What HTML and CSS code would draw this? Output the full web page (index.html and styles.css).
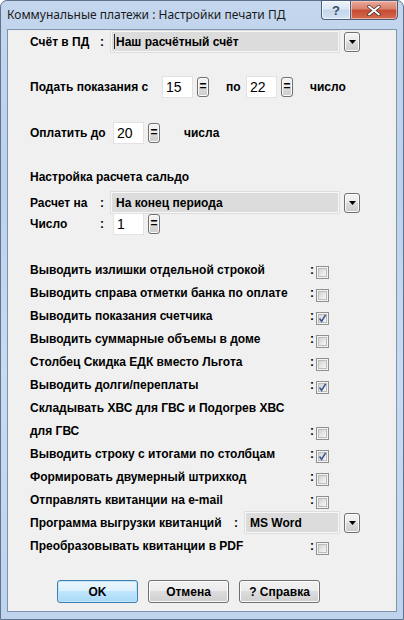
FILE: index.html
```html
<!DOCTYPE html>
<html>
<head>
<meta charset="utf-8">
<link rel="stylesheet" href="styles.css">
</head>
<body>
<div class="window">
  <div class="titlebar">
    <span class="title">Коммунальные платежи : Настройки печати ПД</span>
    <div class="caption-btns">
      <div class="cbtn help">?</div>
      <div class="cbtn close">
        <svg width="14" height="11" viewBox="0 0 14 11"><path d="M2 1.5 L12 9.5 M12 1.5 L2 9.5" stroke="#3a2a2a" stroke-width="3.4" stroke-linecap="round"/><path d="M2 1.5 L12 9.5 M12 1.5 L2 9.5" stroke="#ffffff" stroke-width="2" stroke-linecap="round"/></svg>
      </div>
    </div>
  </div>
  <div class="client">
    <div class="row r-acc">
      <span class="lbl w70">Счёт в ПД</span><span class="colon w11">:</span>
      <div class="combo wide"><span class="caret"></span><span>Наш расчётный счёт</span></div>
      <div class="dd"><svg width="7" height="4" viewBox="0 0 7 4"><path d="M0 0 H7 L3.5 4 Z" fill="#000"/></svg></div>
    </div>

    <div class="row r-podat">
      <span class="lbl w132">Подать показания с</span>
      <div class="inp">15</div>
      <div class="eq">=</div>
      <span class="lbl w20 ml17">по</span>
      <div class="inp">22</div>
      <div class="eq">=</div>
      <span class="lbl ml17">число</span>
    </div>

    <div class="row r-opl">
      <span class="lbl w83">Оплатить до</span>
      <div class="inp">20</div>
      <div class="eq">=</div>
      <span class="lbl ml24">числа</span>
    </div>

    <div class="row r-nastr">
      <span class="lbl">Настройка расчета сальдо</span>
    </div>

    <div class="row r-rasch">
      <span class="lbl w70">Расчет на</span><span class="colon w11">:</span>
      <div class="combo wide"><span>На конец периода</span></div>
      <div class="dd"><svg width="7" height="4" viewBox="0 0 7 4"><path d="M0 0 H7 L3.5 4 Z" fill="#000"/></svg></div>
    </div>

    <div class="row r-chislo">
      <span class="lbl w70">Число</span><span class="colon w13">:</span>
      <div class="inp">1</div>
      <div class="eq">=</div>
    </div>

    <div class="checks">
      <div class="crow"><span class="lbl w280">Выводить излишки отдельной строкой</span><span class="colon w6">:</span><span class="cb"><span class="cbi"></span></span></div>
      <div class="crow"><span class="lbl w280">Выводить справа отметки банка по оплате</span><span class="colon w6">:</span><span class="cb"><span class="cbi"></span></span></div>
      <div class="crow"><span class="lbl w280">Выводить показания счетчика</span><span class="colon w6">:</span><span class="cb"><span class="cbi"><svg width="11" height="11" viewBox="0 0 11 11"><path d="M2.5 5.5 L4.6 8.3 L8.6 1.8" fill="none" stroke="#3f5592" stroke-width="1.6"/></svg></span></span></div>
      <div class="crow"><span class="lbl w280">Выводить суммарные объемы в доме</span><span class="colon w6">:</span><span class="cb"><span class="cbi"></span></span></div>
      <div class="crow"><span class="lbl w280">Столбец Скидка ЕДК вместо Льгота</span><span class="colon w6">:</span><span class="cb"><span class="cbi"></span></span></div>
      <div class="crow"><span class="lbl w280">Выводить долги/переплаты</span><span class="colon w6">:</span><span class="cb"><span class="cbi"><svg width="11" height="11" viewBox="0 0 11 11"><path d="M2.5 5.5 L4.6 8.3 L8.6 1.8" fill="none" stroke="#3f5592" stroke-width="1.6"/></svg></span></span></div>
      <div class="crow"><span class="lbl">Складывать ХВС для ГВС и Подогрев ХВС</span></div>
      <div class="crow"><span class="lbl w280">для ГВС</span><span class="colon w6">:</span><span class="cb"><span class="cbi"></span></span></div>
      <div class="crow"><span class="lbl w280">Выводить строку с итогами по столбцам</span><span class="colon w6">:</span><span class="cb"><span class="cbi"><svg width="11" height="11" viewBox="0 0 11 11"><path d="M2.5 5.5 L4.6 8.3 L8.6 1.8" fill="none" stroke="#3f5592" stroke-width="1.6"/></svg></span></span></div>
      <div class="crow"><span class="lbl w280">Формировать двумерный штрихкод</span><span class="colon w6">:</span><span class="cb"><span class="cbi"></span></span></div>
      <div class="crow"><span class="lbl w280">Отправлять квитанции на e-mail</span><span class="colon w6">:</span><span class="cb"><span class="cbi"></span></span></div>
      <div class="crow"><span class="lbl w204">Программа выгрузки квитанций</span><span class="colon w11">:</span>
        <div class="combo narrow"><span>MS Word</span></div>
        <div class="dd"><svg width="7" height="4" viewBox="0 0 7 4"><path d="M0 0 H7 L3.5 4 Z" fill="#000"/></svg></div>
      </div>
      <div class="crow"><span class="lbl w280">Преобразовывать квитанции в PDF</span><span class="colon w6">:</span><span class="cb"><span class="cbi"></span></span></div>
    </div>

    <div class="buttons">
      <div class="btn default">OK</div>
      <div class="btn">Отмена</div>
      <div class="btn">? Справка</div>
    </div>
  </div>
</div>
</body>
</html>
```

FILE: styles.css
```css
* { box-sizing: border-box; }
html, body { margin: 0; padding: 0; }
body {
  width: 404px;
  height: 620px;
  overflow: hidden;
  background: #ffffff;
  font-family: "Liberation Sans", Arial, sans-serif;
}
.window {
  width: 404px;
  height: 620px;
  border: 1px solid #5f7391;
  border-radius: 7px 7px 0 0;
  background: linear-gradient(180deg, #c3d6ee 0%, #bcd1eb 30%, #c8dbf1 60%, #bed3ec 100%);
  padding: 0 6px 7px 6px;
  display: flex;
  flex-direction: column;
}
.titlebar {
  height: 28px;
  display: flex;
  align-items: flex-start;
  flex: none;
}
.title {
  font-family: "Noto Sans", "Open Sans", sans-serif;
  font-size: 12px;
  color: #1b1b1b;
  margin-top: 5px;
  padding-left: 0;
  white-space: nowrap;
}
.caption-btns {
  margin-left: auto;
  margin-right: -1px;
  margin-top: -1px;
  display: flex;
}
.cbtn {
  height: 20px;
  border: 1px solid #4b5f7d;
  display: flex;
  align-items: center;
  justify-content: center;
}
.help {
  width: 29px;
  border-radius: 0 0 0 4px;
  border-right: none;
  background: linear-gradient(180deg, #eef3fa 0%, #dbe6f4 45%, #c5d6ec 50%, #d3e2f3 100%);
  font-family: "Liberation Sans", Arial, sans-serif;
  font-weight: bold;
  font-size: 13px;
  color: #3a4b63;
  box-shadow: inset 0 0 0 1px rgba(255,255,255,0.7);
}
.close {
  width: 48px;
  border-radius: 0 0 4px 0;
  background: linear-gradient(180deg, #e9a99b 0%, #d9806c 45%, #c54a32 50%, #d36b4d 100%);
  box-shadow: inset 0 0 0 1px rgba(255,220,210,0.6);
}
.client {
  flex: 1;
  background: #f0f0f0;
  border: 1px solid #7f93b0;
  padding-left: 22px;
  display: flex;
  flex-direction: column;
}
.row {
  display: flex;
  align-items: center;
  flex: none;
}
.lbl {
  font-weight: bold;
  font-size: 12px;
  color: #000;
  white-space: nowrap;
  flex: none;
}
.colon {
  font-weight: bold;
  font-size: 12px;
  flex: none;
}
.w6 { width: 6px; }
.w11 { width: 11px; }
.w13 { width: 13px; }
.w20 { width: 20px; }
.w70 { width: 70px; }
.w83 { width: 83px; }
.w132 { width: 132px; }
.w204 { width: 204px; }
.w280 { width: 280px; }
.ml17 { margin-left: 17px; }
.ml24 { margin-left: 24px; }

.r-acc { margin-top: 1px; height: 21px; }
.r-podat { margin-top: 24px; height: 22px; }
.r-opl { margin-top: 24px; height: 22px; }
.r-nastr { margin-top: 24px; height: 18px; }
.r-rasch { margin-top: 6px; height: 21px; }
.r-chislo { margin-top: 0; height: 22px; }

.combo {
  height: 21px;
  background: #dcdcdc;
  border: 1px solid #f7f7f7;
  box-shadow: 0 0 0 0.5px #c9c9c9;
  display: flex;
  align-items: center;
  padding-left: 4px;
  font-weight: bold;
  font-size: 12px;
  color: #000;
  flex: none;
  white-space: nowrap;
}
.combo.wide { width: 228px; }
.combo.narrow { width: 94px; }
.caret {
  width: 1px;
  height: 15px;
  background: #222;
  margin-left: -2px;
  margin-right: 1px;
}
.dd {
  width: 16px;
  height: 20px;
  margin-left: 5px;
  border: 1px solid #707070;
  border-radius: 3px;
  background: linear-gradient(180deg, #f4f4f4 0%, #e9e9e9 50%, #dadada 51%, #cdcdcd 100%);
  box-shadow: inset 0 0 0 1px #fbfbfb;
  display: flex;
  align-items: center;
  justify-content: center;
  flex: none;
}
.inp {
  width: 31px;
  height: 22px;
  background: #ffffff;
  border: 1px solid #e2e2e2;
  font-size: 14px;
  padding-left: 3px;
  line-height: 20px;
  color: #000;
  flex: none;
}
.eq {
  width: 12px;
  height: 20px;
  margin-left: 4px;
  border: 1px solid #707070;
  border-radius: 3px;
  background: linear-gradient(180deg, #f4f4f4 0%, #e9e9e9 50%, #dadada 51%, #cdcdcd 100%);
  box-shadow: inset 0 0 0 1px #fbfbfb;
  font-weight: bold;
  font-size: 12px;
  line-height: 17px;
  text-align: center;
  flex: none;
}

.checks {
  margin-top: 23px;
  display: flex;
  flex-direction: column;
  flex: none;
}
.crow {
  height: 23px;
  display: flex;
  align-items: center;
}
.cb {
  width: 13px;
  height: 13px;
  margin-top: 5px;
  border: 1px solid #8e8f8f;
  background: #f4f4f4;
  padding: 1px;
  flex: none;
}
.cbi {
  display: block;
  width: 9px;
  height: 9px;
  border: 1px solid #bcbcbc;
  background: linear-gradient(135deg, #d3d3d3 0%, #e9e9e9 60%, #f6f6f6 100%);
  position: relative;
}
.cbi svg {
  position: absolute;
  left: -2px;
  top: -2px;
}

.buttons {
  margin-top: 23px;
  margin-left: 27px;
  display: flex;
  gap: 10px;
  flex: none;
}
.btn {
  width: 81px;
  height: 23px;
  border: 1px solid #707070;
  border-radius: 3px;
  background: linear-gradient(180deg, #f2f2f2 0%, #ebebeb 49%, #dddddd 50%, #cfcfcf 100%);
  box-shadow: inset 0 0 0 1px #fcfcfc;
  font-weight: bold;
  font-size: 12px;
  display: flex;
  align-items: center;
  justify-content: center;
  color: #000;
}
.btn.default {
  border-color: #3c7fb1;
  background: linear-gradient(180deg, #eaf6fd 0%, #d9f0fc 49%, #bee6fd 50%, #a7d9f5 100%);
  box-shadow: inset 0 0 0 1px #c2e4f6;
}
```
